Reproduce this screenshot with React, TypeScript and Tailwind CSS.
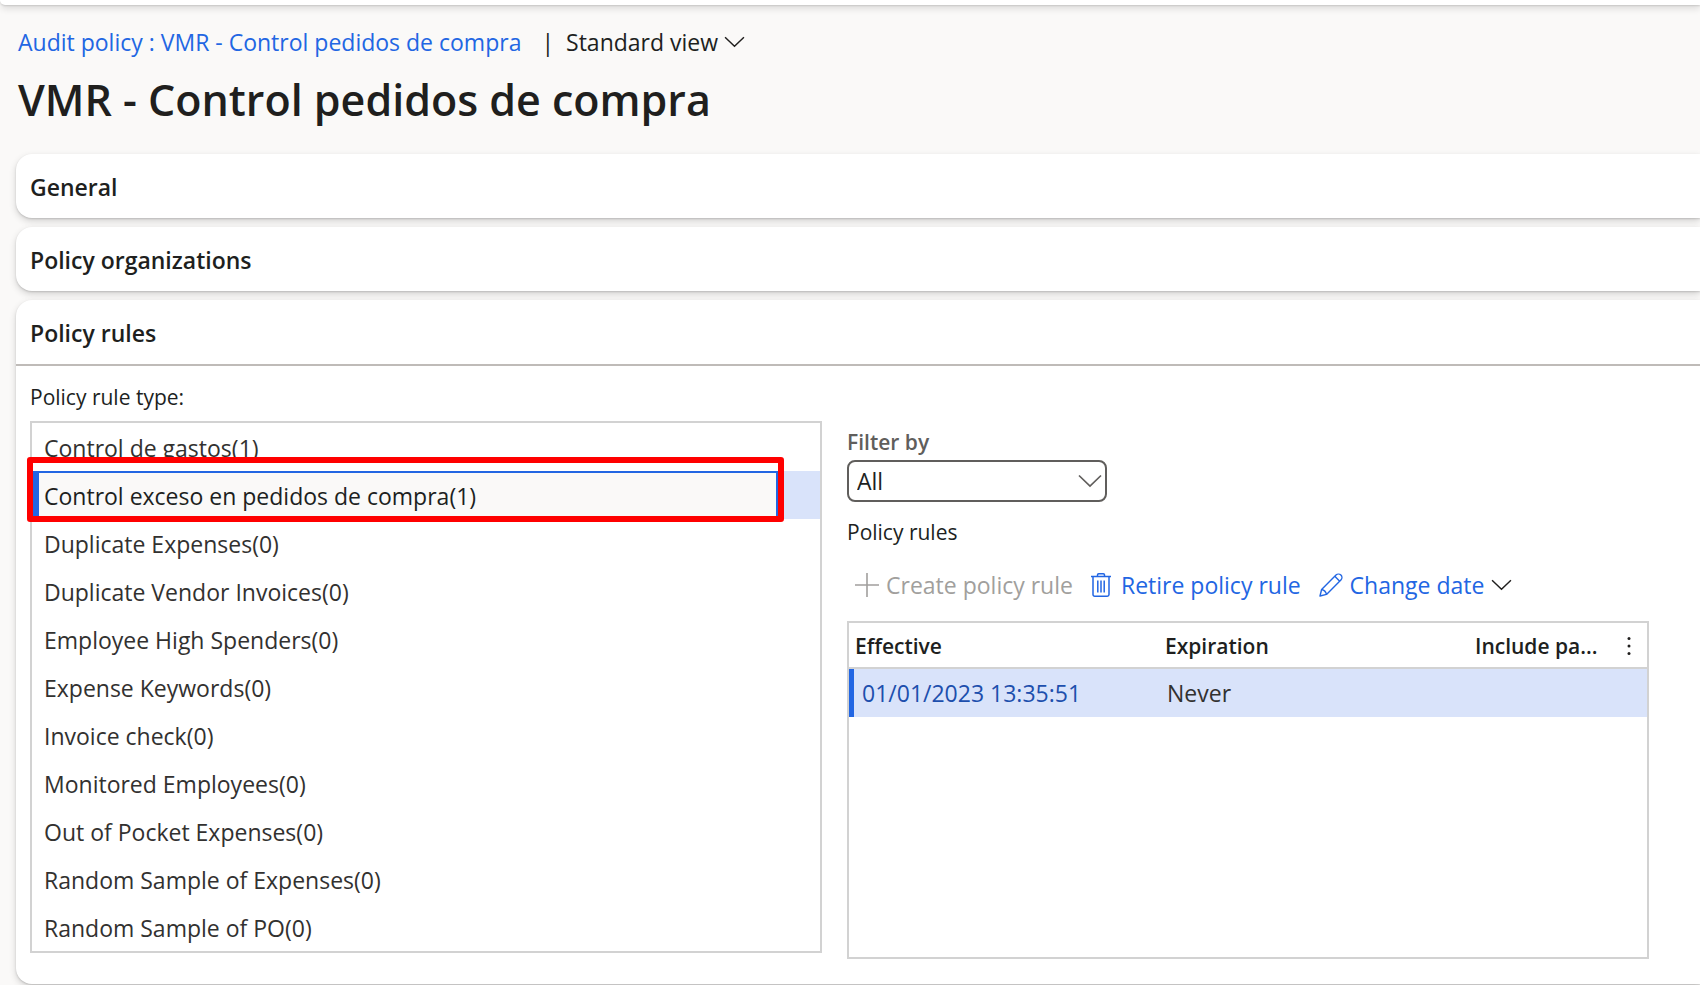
import { useState } from "react";
import type { ReactNode } from "react";

const ruleTypes = [
  { name: "Control de gastos", count: 1 },
  { name: "Control exceso en pedidos de compra", count: 1 },
  { name: "Duplicate Expenses", count: 0 },
  { name: "Duplicate Vendor Invoices", count: 0 },
  { name: "Employee High Spenders", count: 0 },
  { name: "Expense Keywords", count: 0 },
  { name: "Invoice check", count: 0 },
  { name: "Monitored Employees", count: 0 },
  { name: "Out of Pocket Expenses", count: 0 },
  { name: "Random Sample of Expenses", count: 0 },
  { name: "Random Sample of PO", count: 0 },
];

function Chevron({ className }: { className?: string }) {
  return (
    <svg viewBox="0 0 24 14" fill="none" stroke="currentColor" strokeWidth="1.7" className={className} aria-hidden="true">
      <path d="M1 1.5 12 12 23 1.5" />
    </svg>
  );
}

function PlusIcon() {
  return (
    <svg viewBox="0 0 24 24" fill="none" stroke="currentColor" strokeWidth="1.6" className="size-6" aria-hidden="true">
      <path d="M12 0v24M0 12h24" />
    </svg>
  );
}

function TrashIcon() {
  return (
    <svg viewBox="0 0 20 24" fill="none" stroke="currentColor" strokeWidth="1.5" className="h-6 w-5" aria-hidden="true">
      <path d="M0 3.5h20M6.5 3.5V2a1.2 1.2 0 0 1 1.2-1.2h4.6A1.2 1.2 0 0 1 13.5 2v1.5M2 3.5V21.5a1.7 1.7 0 0 0 1.7 1.7h12.6a1.7 1.7 0 0 0 1.7-1.7V3.5M6.8 7.5v12M10 7.5v12M13.2 7.5v12" />
    </svg>
  );
}

function PencilIcon() {
  return (
    <svg viewBox="0 0 24 24" fill="none" stroke="currentColor" strokeWidth="1.4" strokeLinejoin="round" className="size-6" aria-hidden="true">
      <path d="M1 23 2.6 16.5 17 2.1a3.45 3.45 0 0 1 4.9 4.9L7.5 21.4ZM2.6 16.5a6.5 6.5 0 0 1 4.9 4.9M15.8 3.3l4.9 4.9" />
    </svg>
  );
}

function Section({ title, children }: { title: string; children?: ReactNode }) {
  return (
    <section className="rounded-l-2xl bg-white shadow-[0_3px_7px_rgba(0,0,0,0.16),0_1px_2px_rgba(0,0,0,0.14)]">
      <h2>
        <button type="button" className="flex h-16 w-full items-center px-[14px] pt-[2px] text-[23px] font-semibold">
          {title}
        </button>
      </h2>
      {children}
    </section>
  );
}

export default function App() {
  const [selected, setSelected] = useState(1);

  return (
    <div className="min-h-screen overflow-hidden bg-[#faf9f8] font-['Open_Sans','Noto_Sans',sans-serif] text-[#201f1e]">
      <div className="h-[5px] rounded-bl-2xl bg-white shadow-[0_3px_7px_rgba(0,0,0,0.16),0_1px_2px_rgba(0,0,0,0.14)]" />

      <header className="px-[18px] pt-[19px]">
        <div className="flex h-9 items-center text-[23px]">
          <a href="#" className="text-[#2266e3]">
            Audit policy : VMR - Control pedidos de compra
          </a>
          <span className="mr-3 ml-5">|</span>
          <button type="button" className="flex items-center gap-[6px]">
            Standard view
            <Chevron className="h-3 w-[21px]" />
          </button>
        </div>
        <h1 className="mt-[10px] text-[43px] leading-[60px] font-semibold">VMR - Control pedidos de compra</h1>
      </header>

      <main className="mt-6 mb-[2px] ml-4 flex flex-col gap-[9px]">
        <Section title="General" />
        <Section title="Policy organizations" />
        <Section title="Policy rules">
          <div className="grid grid-cols-[792fr_802fr] gap-[25px] border-t-2 border-[#bfbbb8] pt-4 pr-[51px] pb-[25px] pl-[14px]">
            <div>
              <h3 id="rule-types" className="text-[21px] leading-[30px]">
                Policy rule type:
              </h3>
              <ul aria-labelledby="rule-types" className="mt-[9px] border-2 border-[#d2d2d2] text-[23px] text-[#323130]">
                {ruleTypes.map((rule, i) => (
                  <li key={rule.name} className={i === selected ? "relative bg-[#d9e3fa]" : ""}>
                    <button
                      type="button"
                      onClick={() => setSelected(i)}
                      className={
                        i === selected
                          ? "flex h-12 w-[calc(100%-42px)] items-center border-2 border-l-[7px] border-[#2266e3] bg-[#faf9f8] pt-[2px] pl-[5px] text-[#201f1e]"
                          : "flex h-12 w-full items-center pt-[2px] pl-3"
                      }
                    >
                      {rule.name}({rule.count})
                    </button>
                    {i === selected && (
                      <div className="pointer-events-none absolute -top-[14px] right-9 -bottom-[3px] -left-[5px] rounded-[3px] border-[6px] border-[#ff0000]" />
                    )}
                  </li>
                ))}
              </ul>
            </div>

            <div className="pt-[45px]">
              <label htmlFor="filter" className="block text-[21px] leading-[30px] font-semibold text-[#605e5c]">
                Filter by
              </label>
              <div className="relative mt-[3px] w-[260px]">
                <select
                  id="filter"
                  className="h-[42px] w-full appearance-none rounded-lg border-2 border-[#605e5c] bg-white pl-2 text-[23px]"
                >
                  <option>All</option>
                </select>
                <Chevron className="pointer-events-none absolute top-[14px] right-[5px] h-[14px] w-6 text-[#605e5c]" />
              </div>
              <h3 className="mt-[15px] text-[21px] leading-[30px]">Policy rules</h3>

              <div className="mt-[18px] flex h-10 items-center gap-[18px] pl-2 text-[23px] whitespace-nowrap text-[#2266e3]">
                <button type="button" disabled className="flex items-center gap-[7px] text-[#a19f9d]">
                  <PlusIcon />
                  Create policy rule
                </button>
                <button type="button" className="flex items-center gap-[10px]">
                  <TrashIcon />
                  Retire policy rule
                </button>
                <button type="button" className="flex items-center gap-[7px]">
                  <PencilIcon />
                  Change date
                  <Chevron className="h-3 w-[21px] text-[#201f1e]" />
                </button>
              </div>

              <div className="mt-4 min-h-[338px] border-2 border-[#d2d2d2]">
                <table className="w-full table-fixed border-separate border-spacing-0 text-left">
                  <thead>
                    <tr className="h-[46px] text-[21px]">
                      <th className="border-b-2 border-[#d2d2d2] pt-1 pl-[6px] font-semibold">Effective</th>
                      <th className="border-b-2 border-[#d2d2d2] pt-1 pl-[6px] font-semibold">Expiration</th>
                      <th className="w-[178px] border-b-2 border-[#d2d2d2] pt-1 pl-[6px] font-semibold">
                        <div className="flex items-center justify-between pr-[11px]">
                          Include pa...
                          <button type="button" aria-label="More">
                            <svg viewBox="0 0 14 20" fill="currentColor" className="h-5 w-[14px]">
                              <circle cx="7" cy="1.5" r="1.5" />
                              <circle cx="7" cy="9" r="1.5" />
                              <circle cx="7" cy="16.5" r="1.5" />
                            </svg>
                          </button>
                        </div>
                      </th>
                    </tr>
                  </thead>
                  <tbody>
                    <tr className="h-12 bg-[#d9e3fa] text-[23px] text-[#323130]">
                      <td className="border-l-[5px] border-[#2266e3] pl-2">
                        <a href="#" className="text-[#1d4fad]">
                          01/01/2023 13:35:51
                        </a>
                      </td>
                      <td className="pl-2">Never</td>
                      <td />
                    </tr>
                  </tbody>
                </table>
              </div>
            </div>
          </div>
        </Section>
      </main>
    </div>
  );
}
